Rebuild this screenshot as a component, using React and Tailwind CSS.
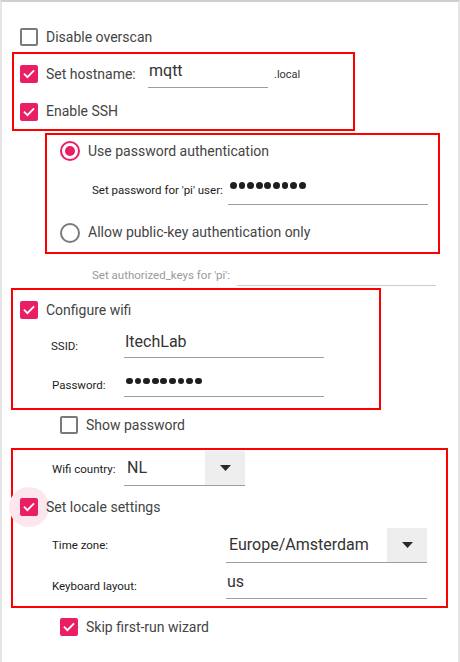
import React from 'react'

const PINK = 'bg-[#e91e63]'

function Check({ checked }) {
  if (!checked) {
    return <div className="w-[18px] h-[18px] shrink-0 rounded-[2px] border-2 border-[#7a7a7a] bg-white" />
  }
  return (
    <div className={`w-[18px] h-[18px] shrink-0 rounded-[2px] ${PINK} flex items-center justify-center`}>
      <svg width="14" height="14" viewBox="0 0 24 24" fill="none">
        <path d="M4.5 12.5l4.8 4.8L19.5 7" stroke="white" strokeWidth="3.2" strokeLinecap="square" />
      </svg>
    </div>
  )
}

function Radio({ checked }) {
  return (
    <div className={`w-[20px] h-[20px] shrink-0 rounded-full border-2 flex items-center justify-center ${checked ? 'border-[#e91e63]' : 'border-[#7a7a7a]'}`}>
      {checked && <div className="w-[10px] h-[10px] rounded-full bg-[#e91e63]" />}
    </div>
  )
}

function Dots() {
  return (
    <div className="flex items-center gap-[1.8px]">
      {Array.from({ length: 9 }).map((_, i) => (
        <span key={i} className="w-[6.8px] h-[6.8px] rounded-full bg-[#1f1f1f]" />
      ))}
    </div>
  )
}

function Caret() {
  return (
    <svg width="11" height="6" viewBox="0 0 11 6">
      <path d="M0 0h11L5.5 6z" fill="#2a2a2a" />
    </svg>
  )
}

function Select({ value, width, textPad }) {
  return (
    <div className={`h-[36px] ${width} border-b border-[#9e9e9e] flex items-stretch`}>
      <div className={`flex-1 flex items-center ${textPad} text-[16px] text-[#333]`}>{value}</div>
      <div className="w-[40px] bg-[#eeeeee] flex items-center justify-center mt-[1px]">
        <Caret />
      </div>
    </div>
  )
}

function Label({ children, className = '' }) {
  return <div className={`text-[11.5px] leading-[16px] text-[#1c1c1c] ${className}`}>{children}</div>
}

export default function App() {
  return (
    <div
      className="w-[460px] h-[662px] bg-white border-t-2 border-l-2 border-r-2 border-t-[#cfcfcf] border-l-[#e6e6e6] border-r-[#e6e6e6] overflow-hidden text-[#444]"
      style={{ fontFamily: 'Roboto, "Liberation Sans", sans-serif' }}
    >
      {/* Disable overscan */}
      <div className="mt-[25px] h-[20px] ml-[18px] flex items-center gap-[8px]">
        <Check checked={false} />
        <span className="text-[14px]">Disable overscan</span>
      </div>

      {/* Hostname + SSH */}
      <div className="mt-[5px] ml-[10px] w-[343px] h-[79px] border-2 border-[#ff0000] pl-[6px]">
        <div className="h-[40px] flex items-center">
          <Check checked />
          <span className="ml-[8px] text-[14px] w-[102px]">Set hostname:</span>
          <div className="w-[120px] h-[30px] border-b border-[#9e9e9e] flex items-center pb-[4px] pl-[1px] text-[16px] text-[#333] self-start mt-[4px]">
            mqtt
          </div>
          <span className="ml-[6px] text-[11px] text-[#333] mt-[3px]">.local</span>
        </div>
        <div className="h-[35px] flex items-center gap-[8px]">
          <Check checked />
          <span className="text-[14px]">Enable SSH</span>
        </div>
      </div>

      {/* SSH auth */}
      <div className="mt-[2px] ml-[43px] w-[395px] h-[121px] border-2 border-[#ff0000] pl-[13px]">
        <div className="h-[32px] flex items-center gap-[8px]">
          <Radio checked />
          <span className="text-[14px]">Use password authentication</span>
        </div>
        <div className="h-[46px] flex items-center pl-[32px]">
          <Label className="w-[136px]">Set password for 'pi' user:</Label>
          <div className="w-[200px] h-[30px] border-b border-[#9e9e9e] flex items-center pb-[8px] pl-[2px]">
            <Dots />
          </div>
        </div>
        <div className="h-[39px] flex items-center gap-[8px]">
          <Radio checked={false} />
          <span className="text-[14px]">Allow public-key authentication only</span>
        </div>
      </div>

      <div className="h-[34px] ml-[90px] flex items-center">
        <div className="w-[145px] text-[11.5px] leading-[16px] text-[#9a9a9a] pt-[8px]">Set authorized_keys for 'pi':</div>
        <div className="w-[199px] h-[30px] border-b border-[#cccccc]" />
      </div>

      {/* Wifi */}
      <div className="ml-[9px] w-[370px] h-[122px] border-2 border-[#ff0000] pl-[7px]">
        <div className="h-[40px] flex items-center gap-[8px]">
          <Check checked />
          <span className="text-[14px]">Configure wifi</span>
        </div>
        <div className="h-[39px] flex items-start pl-[31px]">
          <Label className="w-[73px] mt-[8px]">SSID:</Label>
          <div className="w-[200px] h-[28px] border-b border-[#9e9e9e] flex items-center pb-[3px] pl-[1px] text-[16px] text-[#333]">
            ItechLab
          </div>
        </div>
        <div className="h-[39px] flex items-start pl-[32px]">
          <Label className="w-[72px] mt-[8px]">Password:</Label>
          <div className="w-[200px] h-[28px] border-b border-[#9e9e9e] flex items-center pb-[3px] pl-[2px]">
            <Dots />
          </div>
        </div>
      </div>

      <div className="h-[30px] mb-[8px] ml-[58px] flex items-center gap-[8px]">
        <Check checked={false} />
        <span className="text-[14px]">Show password</span>
      </div>

      {/* Country + locale */}
      <div className="ml-[9px] w-[437px] h-[160px] border-2 border-[#ff0000] pl-[7px]">
        <div className="h-[37px] flex items-start pl-[32px]">
          <Label className="w-[72px] mt-[11px]">Wifi country:</Label>
          <Select value="NL" width="w-[121px]" textPad="pl-[3px]" />
        </div>
        <div className="h-[40px] flex items-center">
          <div className="relative w-[18px] h-[18px]">
            <div className="absolute -left-[11px] -top-[11px] w-[40px] h-[40px] rounded-full bg-[#fde7ee]" />
            <div className="relative">
              <Check checked />
            </div>
          </div>
          <span className="ml-[8px] text-[14px] relative">Set locale settings</span>
        </div>
        <div className="h-[36px] flex items-center pl-[32px]">
          <Label className="w-[174px]">Time zone:</Label>
          <Select value="Europe/Amsterdam" width="w-[201px]" textPad="pl-[3px]" />
        </div>
        <div className="h-[43px] flex items-start pl-[32px]">
          <Label className="w-[174px] mt-[15px]">Keyboard layout:</Label>
          <div className="w-[201px] h-[30px] mt-[6px] border-b border-[#9e9e9e] flex items-center pb-[4px] pl-[1px] text-[16px] text-[#333]">
            us
          </div>
        </div>
      </div>

      <div className="h-[38px] ml-[58px] flex items-center gap-[8px]">
        <Check checked />
        <span className="text-[14px]">Skip first-run wizard</span>
      </div>
    </div>
  )
}
